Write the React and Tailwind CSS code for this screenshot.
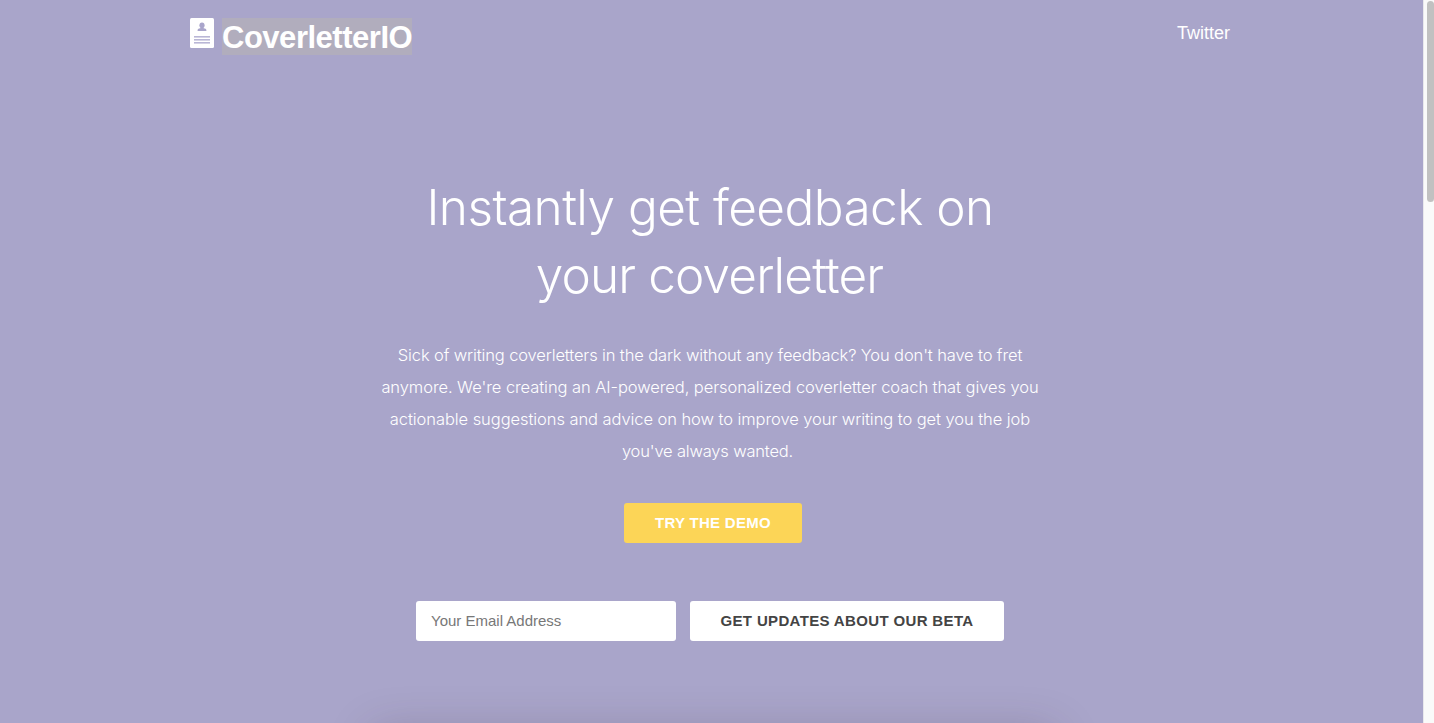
const pitch = [
  {
    text: "Sick of writing coverletters in the dark without any feedback? You don't have to fret",
    spacing: "tracking-[-0.13px]",
  },
  {
    text: "anymore. We're creating an AI-powered, personalized coverletter coach that gives you",
    spacing: "tracking-[-0.07px]",
  },
  {
    text: "actionable suggestions and advice on how to improve your writing to get you the job",
    spacing: "tracking-[-0.07px]",
  },
  { text: "you've always wanted.", spacing: "pr-[5px] tracking-[-0.18px]" },
];

function Logo() {
  return (
    <svg width="24" height="30" viewBox="0 0 24 30" className="shrink-0">
      <rect width="24" height="30" rx="1.5" fill="#fff" />
      <g fill="#a9a5cb">
        <ellipse cx="12" cy="7.3" rx="2.6" ry="2.9" />
        <path d="M10.8 9h2.4v1l2.300.7c.7.2.9.8.9 2.300H7.600c0-1.500.2-2.100.9-2.300l2.300-.7z" />
      </g>
      <g fill="#b9b6d6">
        <rect x="4" y="18" width="16" height="1.6" />
        <rect x="4" y="21" width="16" height="1.6" />
        <rect x="4" y="24" width="16" height="1.6" />
      </g>
    </svg>
  );
}

function Header() {
  return (
    <header className="mx-auto flex h-[60px] w-[1040px] items-start justify-between pt-[18px]">
      <a href="#" className="flex items-start gap-2">
        <Logo />
        <span className="h-[37px] w-[190px] whitespace-nowrap bg-[#b1adbd] text-[31px] font-bold leading-[40px] tracking-[-0.48px]">
          CoverletterIO
        </span>
      </a>
      <a href="#" className="text-lg leading-[30px]">
        Twitter
      </a>
    </header>
  );
}

export default function App() {
  return (
    <div className="flex h-[723px] w-full overflow-hidden bg-[#a9a5ca] font-['Liberation_Sans',Arial,sans-serif] text-white">
      <div className="flex h-full flex-1 flex-col overflow-hidden pr-[3px]">
        <Header />

        <main className="flex flex-col items-center">
          <h1 className="mt-[118px] text-center font-['Inter',sans-serif] text-[49.5px] font-light leading-[68px]">
            <span className="block whitespace-nowrap tracking-[-0.55px]">Instantly get feedback on</span>
            <span className="block whitespace-nowrap pr-px tracking-[-0.85px]">your coverletter</span>
          </h1>

          <p className="mt-[30px] text-center font-['Inter',sans-serif] text-[16.5px] font-light leading-8">
            {pitch.map((line) => (
              <span key={line.text} className={`block whitespace-nowrap ${line.spacing}`}>
                {line.text}
              </span>
            ))}
          </p>

          <button className="ml-[6px] mt-9 h-10 w-[178px] rounded-[3px] bg-[#fcd557] text-[15px] font-bold tracking-[0.3px]">
            TRY THE DEMO
          </button>

          <form className="mt-[58px] flex gap-[14px]">
            <input
              type="email"
              placeholder="Your Email Address"
              className="h-10 w-[260px] rounded-[3px] bg-white px-[15px] pb-[2px] text-[15px] placeholder:text-[#777]"
            />
            <button
              type="button"
              className="h-10 w-[314px] rounded-[3px] bg-white text-[15px] font-bold tracking-[0.35px] text-[#444]"
            >
              GET UPDATES ABOUT OUR BETA
            </button>
          </form>

          <div className="ml-2 mt-[92px] h-[400px] w-[680px] shrink-0 rounded bg-white shadow-[0_0_45px_rgba(60,40,50,0.25)]" />
        </main>
      </div>

      <div className="flex w-[11px] justify-end border-l border-[#e8e8ec] bg-[#fafafa] pt-px">
        <div className="h-[201px] w-[7px] rounded-full bg-[#c1c1c1]" />
      </div>
    </div>
  );
}
